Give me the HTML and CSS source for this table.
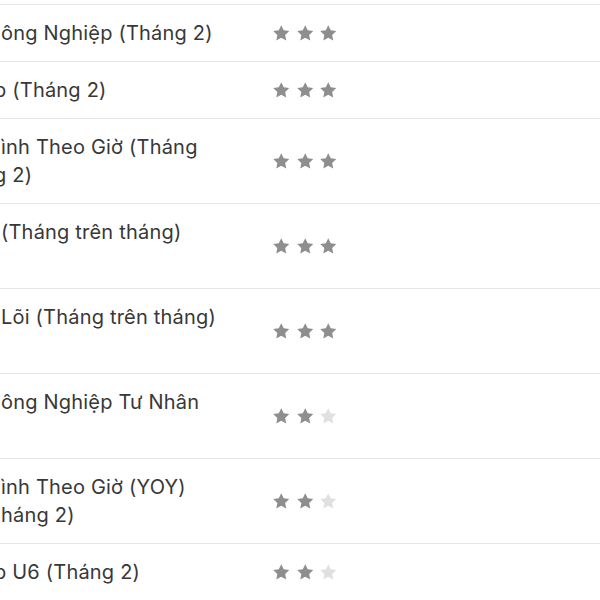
FILE: index.html
```html
<!DOCTYPE html>
<html lang="vi">
<head>
    <meta charset="UTF-8">
    <meta name="viewport" content="width=device-width, initial-scale=1.0">
    <title>Lịch kinh tế</title>
    <link rel="stylesheet" href="styles.css">
</head>
<body>
    <svg width="0" height="0" class="defs">
        <defs>
            <path id="star" d="M12 2.6l2.9 6 6.5.9-4.8 4.5 1.2 6.5L12 17.4l-5.8 3.1 1.2-6.5-4.8-4.5 6.5-.9z"/>
        </defs>
    </svg>

    <div class="events">
        <div class="row">
            <div class="name">ông Nghiệp (Tháng 2)</div>
            <div class="stars"><svg viewBox="0 0 24 24"><use href="#star"/></svg><svg viewBox="0 0 24 24"><use href="#star"/></svg><svg viewBox="0 0 24 24"><use href="#star"/></svg></div>
        </div>
        <div class="row">
            <div class="name"><span class="cut">p</span> (Tháng 2)</div>
            <div class="stars"><svg viewBox="0 0 24 24"><use href="#star"/></svg><svg viewBox="0 0 24 24"><use href="#star"/></svg><svg viewBox="0 0 24 24"><use href="#star"/></svg></div>
        </div>
        <div class="row">
            <div class="name">ình Theo Giờ (Tháng<br><span class="cut">g</span> 2)</div>
            <div class="stars"><svg viewBox="0 0 24 24"><use href="#star"/></svg><svg viewBox="0 0 24 24"><use href="#star"/></svg><svg viewBox="0 0 24 24"><use href="#star"/></svg></div>
        </div>
        <div class="row tall">
            <div class="name">(Tháng trên tháng)</div>
            <div class="stars"><svg viewBox="0 0 24 24"><use href="#star"/></svg><svg viewBox="0 0 24 24"><use href="#star"/></svg><svg viewBox="0 0 24 24"><use href="#star"/></svg></div>
        </div>
        <div class="row tall">
            <div class="name">Lõi (Tháng trên tháng)</div>
            <div class="stars"><svg viewBox="0 0 24 24"><use href="#star"/></svg><svg viewBox="0 0 24 24"><use href="#star"/></svg><svg viewBox="0 0 24 24"><use href="#star"/></svg></div>
        </div>
        <div class="row tall">
            <div class="name">ông Nghiệp Tư Nhân</div>
            <div class="stars"><svg viewBox="0 0 24 24"><use href="#star"/></svg><svg viewBox="0 0 24 24"><use href="#star"/></svg><svg viewBox="0 0 24 24" class="off"><use href="#star"/></svg></div>
        </div>
        <div class="row">
            <div class="name">ình Theo Giờ (YOY)<br>háng 2)</div>
            <div class="stars"><svg viewBox="0 0 24 24"><use href="#star"/></svg><svg viewBox="0 0 24 24"><use href="#star"/></svg><svg viewBox="0 0 24 24" class="off"><use href="#star"/></svg></div>
        </div>
        <div class="row">
            <div class="name"><span class="cut">p</span> U6 (Tháng 2)</div>
            <div class="stars"><svg viewBox="0 0 24 24"><use href="#star"/></svg><svg viewBox="0 0 24 24"><use href="#star"/></svg><svg viewBox="0 0 24 24" class="off"><use href="#star"/></svg></div>
        </div>
    </div>
</body>
</html>
```

FILE: styles.css
```css
body {
    margin: 0;
    background: #ffffff;
    font-family: Inter, "Noto Sans", sans-serif;
    color: #383838;
    overflow: hidden;
}
.defs {
    position: absolute;
}
.events {
    padding-top: 4px;
}
.row {
    display: grid;
    grid-template-columns: 270px auto;
    align-items: center;
    border-top: 1px solid #e6e6e6;
}
.row:last-child {
    border-bottom: 1px solid #e6e6e6;
}
.name {
    padding: 14px 0 14px 1px;
    font-size: 20px;
    letter-spacing: 0.2px;
    line-height: 28px;
    align-self: start;
    overflow: hidden;
}
.tall .name {
    min-height: 56px;
}
.row:not(.tall) .name {
    align-self: center;
}
.cut {
    display: inline-block;
    margin-left: -7px;
}
.stars {
    display: flex;
    gap: 3px;
    margin-left: 1px;
}
.stars svg {
    width: 20.5px;
    height: 20.5px;
    fill: #8e8e8e;
}
.stars svg.off {
    fill: #e0e0e0;
}
```
